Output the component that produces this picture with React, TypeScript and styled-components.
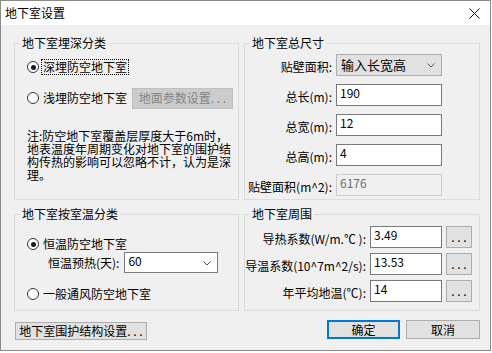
import styled, { createGlobalStyle } from 'styled-components';

const GlobalStyle = createGlobalStyle`
  html, body {
    margin: 0;
    padding: 0;
    background: #ffffff;
  }
  body {
    font-family: "Noto Sans CJK SC", "Liberation Sans", sans-serif;
    font-size: 12px;
    color: #000;
  }
`;

const Window = styled.div`
  width: 491px;
  height: 351px;
  box-sizing: border-box;
  border: 1px solid #8a8a8a;
  background: #f0f0f0;
  display: flex;
  flex-direction: column;
`;

const TitleBar = styled.div`
  height: 24px;
  flex: none;
  background: #ffffff;
  display: flex;
  align-items: center;
  justify-content: space-between;
  padding: 0 10px 0 4px;
  font-size: 12px;
  line-height: 14px;
`;

const Body = styled.div`
  padding: 11px 10px 0 13px;
  display: grid;
  grid-template-columns: 225px 236px;
  grid-template-rows: 164px 104px auto;
  column-gap: 5px;
  row-gap: 7px;
`;

const Group = styled.fieldset`
  margin: 0;
  padding: 0;
  min-width: 0;
  box-sizing: border-box;
  border: 1px solid #dcdcdc;
  height: 100%;
`;

const Legend = styled.legend`
  margin-left: 5px;
  padding: 0 2px;
  font-size: 12px;
  line-height: 14px;
`;

const Stack = styled.div<{ $top: number }>`
  display: flex;
  flex-direction: column;
  padding: ${(p) => p.$top}px 0 0 12px;
`;

const RadioRow = styled.label<{ $h: number; $mt?: number }>`
  display: flex;
  align-items: center;
  gap: 3px;
  height: ${(p) => p.$h}px;
  margin-top: ${(p) => p.$mt ?? 0}px;
  line-height: 14px;
  white-space: nowrap;
`;

const RadioDot = styled.span<{ $on?: boolean }>`
  width: 12px;
  height: 12px;
  box-sizing: border-box;
  border-radius: 50%;
  border: 1px solid #333;
  background: #fff;
  display: flex;
  align-items: center;
  justify-content: center;
  flex: none;
  &::after {
    content: '';
    width: 5px;
    height: 5px;
    border-radius: 50%;
    background: ${(p) => (p.$on ? '#1a1a1a' : 'transparent')};
  }
`;

const RadioText = styled.span<{ $focus?: boolean }>`
  padding: 0 1px;
  border: 1px dotted ${(p) => (p.$focus ? '#000' : 'transparent')};
  margin-left: -1px;
`;

const Button = styled.button<{ $w: number; $h: number; $primary?: boolean; $disabled?: boolean }>`
  width: ${(p) => p.$w}px;
  height: ${(p) => p.$h}px;
  box-sizing: border-box;
  padding: 0;
  font-family: inherit;
  font-size: 12px;
  line-height: 14px;
  white-space: nowrap;
  color: ${(p) => (p.$disabled ? '#838383' : '#000')};
  background: ${(p) => (p.$disabled ? '#cccccc' : '#e1e1e1')};
  border: ${(p) =>
    p.$primary ? '2px solid #0078d7' : p.$disabled ? '1px solid #bfbfbf' : '1px solid #adadad'};
  flex: none;
`;

const Note = styled.div`
  margin-top: 20px;
  font-size: 12px;
  line-height: 13px;
`;

const NoteLine = styled.span`
  display: block;
  white-space: nowrap;
`;

const FormGrid = styled.div<{ $cols: string; $top: number; $gap: number; $rowH: number }>`
  display: grid;
  grid-template-columns: ${(p) => p.$cols};
  grid-auto-rows: ${(p) => p.$rowH}px;
  column-gap: 4px;
  row-gap: ${(p) => p.$gap}px;
  padding-top: ${(p) => p.$top}px;
  align-items: center;
`;

const Label = styled.span`
  justify-self: end;
  white-space: nowrap;
  padding-top: 3px;
  line-height: 14px;
`;

const TextBox = styled.div<{ $readOnly?: boolean }>`
  height: 100%;
  box-sizing: border-box;
  border: 1px solid ${(p) => (p.$readOnly ? '#cccccc' : '#7a7a7a')};
  background: ${(p) => (p.$readOnly ? '#f0f0f0' : '#ffffff')};
  color: ${(p) => (p.$readOnly ? '#6d6d6d' : '#000')};
  padding: 1px 3px;
  font-size: 12px;
  line-height: 14px;
`;

const Select = styled.div<{ $flat?: boolean; $w?: number }>`
  height: 100%;
  ${(p) => (p.$w ? `width: ${p.$w}px;` : '')}
  box-sizing: border-box;
  border: 1px solid ${(p) => (p.$flat ? '#7a7a7a' : '#adadad')};
  background: ${(p) => (p.$flat ? '#ffffff' : '#e1e1e1')};
  display: flex;
  align-items: ${(p) => (p.$flat ? 'flex-start' : 'center')};
  justify-content: space-between;
  padding: ${(p) => (p.$flat ? '1px 6px 0 3px' : '0 6px 0 4px')};
  font-size: ${(p) => (p.$flat ? 12 : 13)}px;
  line-height: 14px;
  flex: none;
  svg {
    align-self: center;
  }
`;

const SubRow = styled.div`
  display: flex;
  align-items: center;
  gap: 5px;
  height: 21px;
  padding-left: 21px;
  line-height: 14px;
`;

const Footer = styled.div`
  grid-column: 1 / -1;
  display: flex;
  align-items: flex-start;
  gap: 6px;
  margin-top: 2px;
  padding-left: 1px;
`;

const Spacer = styled.div`
  flex: 1;
`;

const Chevron = () => (
  <svg width="8" height="5" viewBox="0 0 8 5">
    <path d="M0.5 0.5 L4 4 L7.5 0.5" fill="none" stroke="#555" strokeWidth="1" />
  </svg>
);

const CloseIcon = () => (
  <svg width="11" height="11" viewBox="0 0 11 11">
    <path d="M0.5 0.5 L10.5 10.5 M10.5 0.5 L0.5 10.5" stroke="#111" strokeWidth="1" />
  </svg>
);

const noteLines = [
  '注:防空地下室覆盖层厚度大于6m时，',
  '地表温度年周期变化对地下室的围护结',
  '构传热的影响可以忽略不计，认为是深',
  '理。',
];

const App = () => {
  return (
    <>
      <GlobalStyle />
      <Window>
        <TitleBar>
          <span>地下室设置</span>
          <CloseIcon />
        </TitleBar>
        <Body>
          <Group>
            <Legend>地下室埋深分类</Legend>
            <Stack $top={7}>
              <RadioRow $h={20}>
                <RadioDot $on />
                <RadioText $focus>深埋防空地下室</RadioText>
              </RadioRow>
              <RadioRow $h={22} $mt={10}>
                <RadioDot />
                <RadioText>浅埋防空地下室</RadioText>
                <Button $w={101} $h={21} $disabled>
                  地面参数设置. . .
                </Button>
              </RadioRow>
              <Note>
                {noteLines.map((line) => (
                  <NoteLine key={line}>{line}</NoteLine>
                ))}
              </Note>
            </Stack>
          </Group>

          <Group>
            <Legend>地下室总尺寸</Legend>
            <FormGrid $cols="87px 106px" $top={4} $gap={8} $rowH={22}>
              <Label>贴壁面积:</Label>
              <Select>
                <span>输入长宽高</span>
                <Chevron />
              </Select>
              <Label>总长(m):</Label>
              <TextBox>190</TextBox>
              <Label>总宽(m):</Label>
              <TextBox>12</TextBox>
              <Label>总高(m):</Label>
              <TextBox>4</TextBox>
              <Label>贴壁面积(m^2):</Label>
              <TextBox $readOnly>6176</TextBox>
            </FormGrid>
          </Group>

          <Group>
            <Legend>地下室按室温分类</Legend>
            <Stack $top={15}>
              <RadioRow $h={16}>
                <RadioDot $on />
                <RadioText>恒温防空地下室</RadioText>
              </RadioRow>
              <SubRow>
                <span>恒温预热(天):</span>
                <Select $flat $w={94}>
                  <span>60</span>
                  <Chevron />
                </Select>
              </SubRow>
              <RadioRow $h={16} $mt={13}>
                <RadioDot />
                <RadioText>一般通风防空地下室</RadioText>
              </RadioRow>
            </Stack>
          </Group>

          <Group>
            <Legend>地下室周围</Legend>
            <FormGrid $cols="121px 72px 26px" $top={5} $gap={5} $rowH={22}>
              <Label>导热系数(W/m.℃ ):</Label>
              <TextBox>3.49</TextBox>
              <Button $w={26} $h={22}>. . .</Button>
              <Label>导温系数(10^7m^2/s):</Label>
              <TextBox>13.53</TextBox>
              <Button $w={26} $h={22}>. . .</Button>
              <Label>年平均地温(℃):</Label>
              <TextBox>14</TextBox>
              <Button $w={26} $h={22}>. . .</Button>
            </FormGrid>
          </Group>

          <Footer>
            <Button $w={132} $h={18} style={{ marginTop: 2 }}>
              地下室围护结构设置. . .
            </Button>
            <Spacer />
            <Button $w={73} $h={19} $primary>
              确定
            </Button>
            <Button $w={74} $h={19}>
              取消
            </Button>
          </Footer>
        </Body>
      </Window>
    </>
  );
};

export default App;
